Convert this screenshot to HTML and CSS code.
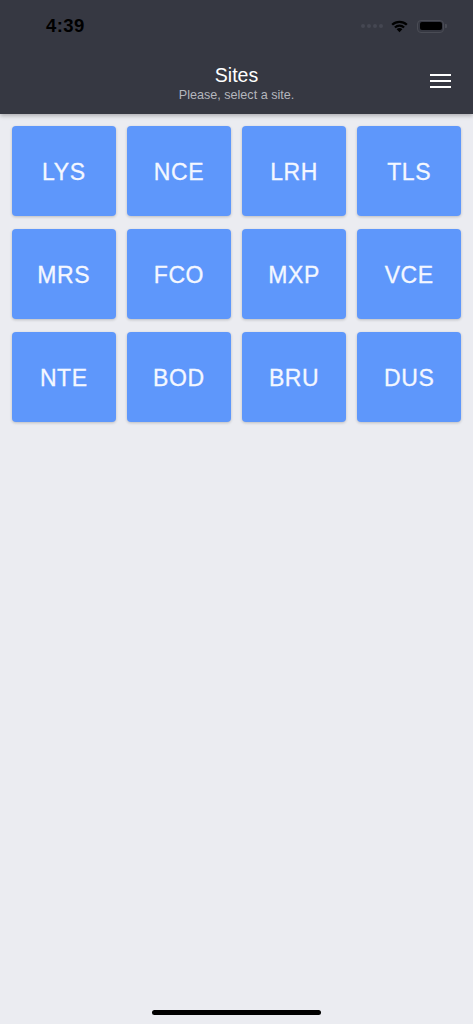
FILE: index.html
```html
<!DOCTYPE html>
<html>
<head>
<meta charset="utf-8">
<link rel="stylesheet" href="styles.css">
</head>
<body>
<div class="screen">
  <header class="header">
    <div class="status">
      <span class="time">4:39</span>
      <div class="status-icons">
        <span class="signal"><i></i><i></i><i></i><i></i></span>
        <svg class="wifi" width="19" height="14" viewBox="0 0 18 13">
          <path d="M9 12.5 L6.3 9.6 A3.8 3.8 0 0 1 11.7 9.6 Z" fill="#000"/>
          <path d="M3.9 7.2 A7.3 7.3 0 0 1 14.1 7.2 L12.6 8.7 A5.2 5.2 0 0 0 5.4 8.7 Z" fill="#000"/>
          <path d="M1.3 4.6 A11 11 0 0 1 16.7 4.6 L15.2 6.1 A8.9 8.9 0 0 0 2.8 6.1 Z" fill="#000"/>
        </svg>
        <span class="battery"><span class="battery-fill"></span></span>
        <span class="battery-cap"></span>
      </div>
    </div>
    <div class="nav">
      <div class="titles">
        <div class="title">Sites</div>
        <div class="subtitle">Please, select a site.</div>
      </div>
      <div class="menu"><span></span><span></span><span></span></div>
    </div>
  </header>
  <main class="grid">
    <div class="tile">LYS</div>
    <div class="tile">NCE</div>
    <div class="tile">LRH</div>
    <div class="tile">TLS</div>
    <div class="tile">MRS</div>
    <div class="tile">FCO</div>
    <div class="tile">MXP</div>
    <div class="tile">VCE</div>
    <div class="tile">NTE</div>
    <div class="tile">BOD</div>
    <div class="tile">BRU</div>
    <div class="tile">DUS</div>
  </main>
  <div class="home-indicator"></div>
</div>
</body>
</html>
```

FILE: styles.css
```css
* { box-sizing: border-box; }
html, body { margin: 0; padding: 0; }
body {
  background: #ebecf1;
  font-family: "Liberation Sans", Arial, sans-serif;
}
.screen {
  width: 473px;
  height: 1024px;
  position: relative;
  display: flex;
  flex-direction: column;
  overflow: hidden;
}
.header {
  background: #363842;
  height: 114px;
  box-shadow: 0 2px 4px rgba(0,0,0,0.25);
  position: relative;
  z-index: 2;
}
.status {
  height: 52px;
  display: flex;
  align-items: center;
  justify-content: space-between;
  padding: 0 26px 0 46px;
}
.time {
  font-size: 18.5px;
  font-weight: bold;
  color: #000;
  letter-spacing: 0.4px;
}
.status-icons {
  display: flex;
  align-items: center;
}
.signal { display: flex; gap: 2px; margin-right: 7px; }
.signal i {
  display: block; width: 4px; height: 4px; border-radius: 50%;
  background: #454752;
}
.wifi { margin-right: 8px; }
.battery {
  width: 27px; height: 13px;
  border: 1px solid #4a4c55;
  border-radius: 4px;
  padding: 1.5px;
  display: flex;
}
.battery-fill { flex: 1; background: #000; border-radius: 2px; }
.battery-cap {
  width: 2px; height: 4px; background: #4a4c55;
  border-radius: 0 1px 1px 0; margin-left: 1px;
}
.nav {
  height: 62px;
  display: flex;
  align-items: flex-start;
  justify-content: center;
  position: relative;
}
.titles { text-align: center; padding-top: 12px; }
.title { color: #fff; font-size: 19.5px; line-height: 23px; }
.subtitle { color: #b4b6bd; font-size: 12.6px; line-height: 15px; margin-top: 1px; }
.menu {
  position: absolute;
  right: 22px;
  top: 22px;
  width: 21px;
  display: flex;
  flex-direction: column;
  gap: 4px;
}
.menu span { display: block; height: 2px; background: #fff; }
.grid {
  display: grid;
  grid-template-columns: repeat(4, 1fr);
  column-gap: 11.5px;
  row-gap: 13px;
  padding: 12px 12px;
}
.tile {
  height: 90px;
  padding-top: 3px;
  background: #5e97fb;
  border-radius: 4px;
  box-shadow: 0 1px 3px rgba(0,0,0,0.2);
  display: flex;
  align-items: center;
  justify-content: center;
  color: #f4f7ff;
  font-size: 23px;
  letter-spacing: 0.6px;
  -webkit-text-stroke: 0.3px #f4f7ff;
}
.home-indicator {
  position: absolute;
  left: 152px;
  bottom: 9px;
  width: 169px;
  height: 5px;
  border-radius: 3px;
  background: #000;
}
```
